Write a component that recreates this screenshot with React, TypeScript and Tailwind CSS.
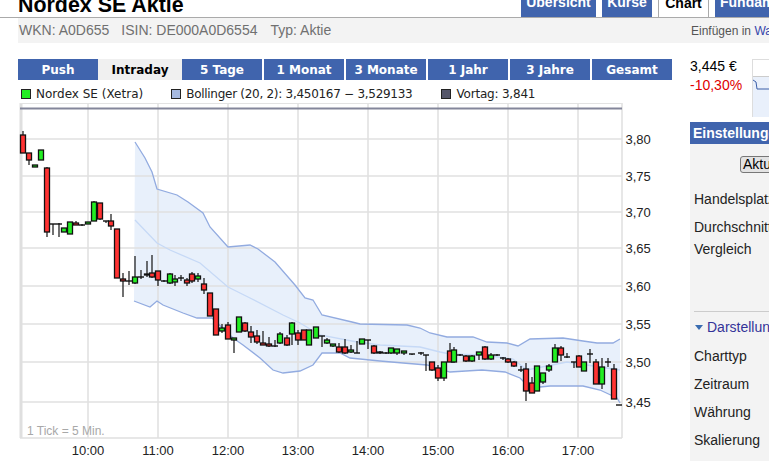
const sans = "font-['Liberation_Sans',Arial,sans-serif]";

type C = [number, number, number, number, number, "r" | "g" | "f"];
const candles: C[] = [
  [23, 135, 153, 131, 153, "r"], [29, 153, 160, 153, 165, "r"], [35, 165, 167, 165, 167, "g"], [41, 150, 160, 150, 160, "g"],
  [47, 168, 232, 167, 237, "r"], [53, 224, 224, 224, 235, "f"], [59, 224, 224, 223, 237, "f"], [64, 228, 232, 228, 232, "g"],
  [70, 222, 234, 222, 234, "g"], [76, 223, 225, 221, 225, "r"], [82, 225, 225, 224, 226, "f"], [88, 222, 224, 222, 224, "g"],
  [94, 202, 221, 201, 221, "g"], [100, 203, 219, 203, 220, "r"], [106, 221, 221, 221, 223, "f"], [111, 221, 226, 214, 230, "r"],
  [117, 229, 278, 229, 278, "r"], [123, 279, 281, 273, 297, "r"], [129, 281, 281, 271, 285, "f"], [135, 277, 283, 256, 284, "g"],
  [141, 277, 277, 270, 279, "f"], [147, 274, 275, 261, 277, "g"], [152, 273, 277, 255, 278, "r"], [158, 271, 280, 271, 286, "r"],
  [164, 281, 281, 280, 282, "f"], [170, 274, 283, 273, 284, "g"], [175, 279, 282, 275, 286, "g"], [181, 278, 278, 275, 281, "f"],
  [187, 280, 283, 278, 286, "r"], [192, 274, 281, 272, 283, "r"], [198, 276, 279, 273, 282, "g"], [204, 284, 290, 278, 294, "r"],
  [210, 293, 316, 293, 316, "r"], [216, 309, 335, 309, 335, "r"], [222, 328, 331, 324, 333, "g"], [228, 325, 339, 322, 339, "r"],
  [234, 338, 340, 338, 353, "g"], [239, 317, 332, 317, 332, "g"], [245, 323, 331, 322, 332, "r"], [251, 332, 337, 326, 343, "r"],
  [257, 336, 342, 330, 344, "r"], [263, 343, 345, 331, 345, "r"], [269, 344, 346, 337, 347, "r"], [275, 346, 346, 340, 347, "f"],
  [280, 334, 343, 332, 344, "g"], [287, 338, 345, 335, 346, "r"], [292, 323, 334, 322, 345, "g"], [298, 333, 340, 330, 345, "r"],
  [304, 330, 340, 330, 340, "r"], [309, 330, 345, 330, 345, "g"], [316, 327, 338, 327, 338, "g"], [322, 336, 336, 336, 347, "f"],
  [327, 340, 343, 338, 344, "g"], [333, 344, 346, 344, 347, "g"], [339, 347, 352, 343, 353, "r"], [345, 347, 353, 339, 354, "r"],
  [351, 350, 352, 345, 353, "g"], [357, 353, 353, 341, 353, "f"], [362, 339, 344, 339, 344, "g"], [368, 340, 340, 340, 349, "f"],
  [374, 346, 353, 345, 354, "r"], [380, 352, 353, 351, 354, "r"], [386, 353, 353, 352, 354, "f"], [391, 348, 353, 348, 354, "g"],
  [397, 349, 353, 349, 355, "g"], [404, 351, 353, 351, 355, "g"], [412, 354, 354, 354, 355, "f"], [421, 353, 353, 352, 355, "f"],
  [426, 355, 355, 355, 371, "f"], [432, 362, 370, 362, 371, "r"], [438, 368, 378, 365, 381, "r"], [444, 362, 378, 362, 381, "g"],
  [450, 351, 362, 343, 362, "r"], [454, 350, 362, 347, 363, "g"], [460, 355, 355, 354, 356, "f"], [466, 356, 361, 355, 362, "r"],
  [472, 356, 361, 355, 362, "g"], [479, 352, 355, 352, 360, "g"], [485, 347, 359, 346, 360, "r"], [491, 355, 359, 353, 360, "g"],
  [497, 355, 355, 354, 356, "f"], [503, 358, 358, 357, 360, "f"], [508, 359, 362, 358, 363, "r"], [514, 362, 366, 361, 367, "r"],
  [521, 370, 370, 366, 372, "f"], [526, 369, 391, 363, 401, "r"], [532, 383, 393, 377, 393, "r"], [537, 366, 391, 366, 391, "g"],
  [543, 373, 382, 373, 384, "g"], [549, 366, 370, 364, 372, "g"], [555, 348, 362, 344, 362, "g"], [561, 348, 355, 346, 361, "r"],
  [567, 357, 357, 353, 358, "f"], [574, 362, 362, 362, 368, "f"], [579, 356, 367, 355, 367, "r"], [584, 362, 371, 362, 371, "g"],
  [590, 354, 354, 349, 363, "f"], [596, 362, 384, 359, 384, "r"], [602, 367, 384, 358, 389, "g"], [608, 362, 362, 358, 367, "f"],
  [614, 369, 399, 364, 399, "r"], [619, 405, 405, 405, 405, "f"],
];

const upper = "135,142 145,158 152,172 157,189 177,195 188,202 203,213 210,227 228,247 250,245 258,249 275,262 295,285 305,298 313,300 322,315 352,322 360,324 407,325 420,328 430,333 447,337 473,337 487,342 507,343 518,346 530,339 563,338 583,341 597,343 613,343 620,339";
const lower = "620,403 617,398 600,390 583,386 550,386 530,388 520,378 505,372 482,370 450,372 427,365 403,363 380,361 350,358 340,353 322,353 313,365 300,371 283,373 273,370 260,358 243,345 233,338 212,318 197,318 183,313 163,305 157,301 150,307 134,301";
const middle = "135,220 157,243 170,250 200,263 228,287 250,298 283,315 300,323 320,335 357,342 380,345 420,347 440,352 450,354 483,355 513,359 527,370 567,362 620,370";
const xs = [88, 158, 228, 298, 368, 438, 508, 578];
const ys: [number, string][] = [[139, "3,80"], [176, "3,75"], [212, "3,70"], [248, "3,65"], [286, "3,60"], [324, "3,55"], [362, "3,50"], [402, "3,45"]];
const times = ["10:00", "11:00", "12:00", "13:00", "14:00", "15:00", "16:00", "17:00"];
const ranges = ["Push", "Intraday", "5 Tage", "1 Monat", "3 Monate", "1 Jahr", "3 Jahre", "Gesamt"];

function Chart() {
  return (
    <svg width="690" height="358" viewBox="0 103 690 358" className="block shrink-0" fontFamily="'Liberation Sans', Arial, sans-serif">
      <polygon points={`${upper} ${lower}`} fill="#e8f0fb" />
      {xs.map((x) => <line key={x} x1={x} x2={x} y1={103} y2={438} stroke="#dfdfdf" strokeWidth="1.5" />)}
      {ys.map(([y]) => <line key={y} x1={20} x2={622} y1={y} y2={y} stroke="#e0e0e0" strokeWidth="1.5" />)}
      <line x1="21" x2="21" y1="103" y2="438" stroke="#dfdfdf" strokeWidth="3" />
      <line x1="622" x2="622" y1="103" y2="438" stroke="#dfdfdf" strokeWidth="1.5" />
      <line x1="20" x2="622" y1="438" y2="438" stroke="#dfdfdf" strokeWidth="1.5" />
      <line x1="20" x2="622" y1="103.5" y2="103.5" stroke="#e3e3e3" />
      <line x1="20" x2="622" y1="108.5" y2="108.5" stroke="#83869a" strokeWidth="2" />
      <polyline points={upper} fill="none" stroke="#92abe0" strokeWidth="1.3" />
      <polyline points={lower} fill="none" stroke="#92abe0" strokeWidth="1.3" />
      <polyline points={middle} fill="none" stroke="#c6d9f6" strokeWidth="1.3" />
      {candles.map(([x, t, b, wt, wb, c], i) => (
        <g key={i}>
          <line x1={x} x2={x} y1={wt} y2={wb} stroke="#111" strokeWidth="1.2" />
          {c === "f" ? (
            <line x1={x - 3} x2={x + 3} y1={t} y2={t} stroke="#111" strokeWidth="1.4" />
          ) : (
            <rect x={x - 2.5} y={t} width="5" height={b - t} fill={c === "r" ? "#ff3333" : "#22ee22"} stroke="#111" strokeWidth="1.3" />
          )}
        </g>
      ))}
      {ys.map(([y, l]) => <text key={l} x="625.5" y={y + 4.5} fontSize="13" fill="#222">{l}</text>)}
      {times.map((t, i) => <text key={t} x={xs[i]} y="455" fontSize="13" fill="#222" textAnchor="middle">{t}</text>)}
      <text x="27" y="435" fontSize="12" fill="#a8a8a8">1 Tick = 5 Min.</text>
    </svg>
  );
}

function Swatch({ color }: { color: string }) {
  return <span className="mr-[5px] block h-[10px] w-[10px] shrink-0 border border-[#222]" style={{ backgroundColor: color }} />;
}

export default function App() {
  return (
    <div className={`${sans} h-[461px] w-[769px] overflow-hidden bg-white text-[14px] text-[#222]`}>
      <div className="flex h-[18px] items-end overflow-hidden border-b border-[#aaaaaa] pl-[18px]">
        <div className="h-[17px] flex-1 overflow-hidden">
          <div className="mt-[-8px] text-[21.4px] font-bold leading-[26px] text-black">Nordex SE Aktie</div>
        </div>
        <div className="flex h-[17px] items-start text-[14px] font-bold text-white">
          <div className="mr-[6px] h-full w-[75px] overflow-hidden bg-[#4064ad] text-center"><div className="mt-[-6px] leading-[16px]">Übersicht</div></div>
          <div className="mr-[6px] h-full w-[50px] overflow-hidden bg-[#4064ad] text-center"><div className="mt-[-6px] leading-[16px]">Kurse</div></div>
          <div className="mr-[6px] h-[18px] w-[51px] overflow-hidden border-x border-[#aaaaaa] bg-white text-center text-black"><div className="mt-[-5px] leading-[16px]">Chart</div></div>
          <div className="h-full w-[54px] overflow-hidden whitespace-nowrap bg-[#4064ad] pl-[5px]"><div className="mt-[-6px] leading-[16px]">Fundamental</div></div>
        </div>
      </div>

      <div className="ml-[18px] flex h-[25px] items-center bg-[#f3f3f3] pl-[1px] text-[14px] text-[#707070]">
        <span className="mr-[12px]">WKN: A0D655</span>
        <span className="mr-[13px]">ISIN: DE000A0D6554</span>
        <span className="flex-1">Typ: Aktie</span>
        <span className="w-[78px] overflow-hidden whitespace-nowrap text-[12px] text-[#555]">Einfügen in <span className="text-[#3344aa]">Watchlist</span></span>
      </div>

      <div className="flex">
        <div className="w-[690px] shrink-0">
          <div className="ml-[18px] mt-[16px] flex h-[21px] w-[654px] gap-[2px] font-['DejaVu_Sans',Verdana,sans-serif] text-[12px] font-bold text-white">
            {ranges.map((r) => (
              <div key={r} className={r === "Intraday" ? "-mx-[2px] flex h-full w-[84px] shrink-0 items-center justify-center bg-[#f0f0f0] text-black" : "flex h-full w-[80px] shrink-0 items-center justify-center bg-[#4064ad]"}>{r}</div>
            ))}
          </div>
          <div className="ml-[21px] flex h-[23px] items-center whitespace-nowrap pt-[5px] font-['DejaVu_Sans',Verdana,sans-serif] text-[12px] text-[#222]">
            <Swatch color="#22ee22" /><span className="mr-[28px]">Nordex SE (Xetra)</span>
            <Swatch color="#a6b9e0" /><span className="mr-[29px] tracking-[-0.28px]">Bollinger (20, 2): 3,450167 − 3,529133</span>
            <Swatch color="#55566a" /><span className="tracking-[-0.2px]">Vortag: 3,841</span>
          </div>
          <Chart />
        </div>

        <div className="flex-1 overflow-hidden">
          <div className="flex h-[79px]">
            <div className="w-[63px] pt-[14px]">
              <div className="text-[14px] leading-[19px] text-black">3,445 €</div>
              <div className="text-[14px] leading-[19px] text-[#e00000]">-10,30%</div>
            </div>
            <div className="mt-[16px] h-[58px] flex-1 border-l border-t border-[#dddddd] bg-[#e9f0fb]">
              <div className="h-[17px] border-b border-[#cccccc] bg-white" />
              <svg width="16" height="30" className="block"><polyline points="0,3 3,5 4,12 9,12 16,12" fill="none" stroke="#3b5ea8" strokeWidth="1" /></svg>
            </div>
          </div>
          <div className="h-[339px] w-[200px] bg-[#f3f3f3]">
            <div className="h-[22px] whitespace-nowrap bg-[#4064ad] pl-[3px] text-[14px] font-bold leading-[22px] text-white">Einstellungen</div>
            <div className="pl-[50px] pt-[12px]">
              <div className="flex h-[17px] w-[70px] items-center rounded-[3px] border border-[#777] bg-[#e3e3e3] pl-[2px] text-[14px] text-black">Aktualisieren</div>
            </div>
            <div className="px-[4px] pt-[16px] text-[14px] text-[#222]">
              <div className="h-[28px] leading-[20px]">Handelsplatz</div>
              <div className="h-[22px] leading-[20px]">Durchschnitt</div>
              <div className="h-[71px] leading-[20px]">Vergleich</div>
            </div>
            <div className="ml-[4px] mt-[1px] w-[75px] border-t border-[#cccccc]" />
            <div className="flex h-[29px] items-center whitespace-nowrap pl-[5px] pt-[2px] text-[#333399]">
              <svg width="8" height="6" className="mr-[4px] shrink-0"><polygon points="0,0 8,0 4,5" fill="#3a6cb0" /></svg>
              Darstellung
            </div>
            <div className="px-[4px] pt-[1px] leading-[28px]">
              <div className="h-[28px]">Charttyp</div>
              <div className="h-[28px]">Zeitraum</div>
              <div className="h-[28px]">Währung</div>
              <div className="h-[28px]">Skalierung</div>
            </div>
          </div>
        </div>
      </div>
    </div>
  );
}
